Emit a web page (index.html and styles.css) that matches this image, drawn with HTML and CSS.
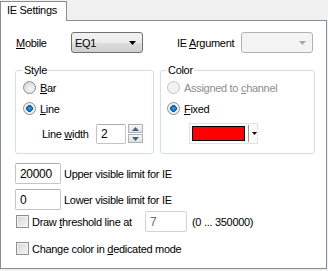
FILE: index.html
```html
<!DOCTYPE html>
<html lang="en">
<head>
    <meta charset="UTF-8">
    <title>IE Settings</title>
    <link rel="stylesheet" href="styles.css">
</head>
<body>
    <div class="tabs">
        <div class="tab">IE Settings</div>
    </div>
    <div class="panel">
        <div class="top-row">
            <span class="lbl lbl-mobile"><u>M</u>obile</span>
            <div class="combo">
                <span class="combo-text">EQ1</span>
                <svg class="arrow" width="7" height="4" viewBox="0 0 7 4"><path d="M0 0h7L3.5 4z" fill="#000"/></svg>
            </div>
            <span class="lbl lbl-arg">IE <u>A</u>rgument</span>
            <div class="combo disabled">
                <span class="combo-text"></span>
                <svg class="arrow" width="7" height="4" viewBox="0 0 7 4"><path d="M0 0h7L3.5 4z" fill="#a7a7a7"/></svg>
            </div>
        </div>

        <div class="groups">
            <fieldset class="group group-style">
                <legend>Style</legend>
                <div class="opt"><span class="radio"></span><span><u>B</u>ar</span></div>
                <div class="opt"><span class="radio checked"></span><span><u>L</u>ine</span></div>
                <div class="width-row">
                    <span class="width-lbl">Line <u>w</u>idth</span>
                    <span class="edit edit-width">2</span>
                    <span class="spin">
                        <span class="spin-btn"><svg width="7" height="4" viewBox="0 0 7 4"><path d="M0 4h7L3.5 0z" fill="#4b5c7c"/></svg></span>
                        <span class="spin-btn"><svg width="7" height="4" viewBox="0 0 7 4"><path d="M0 0h7L3.5 4z" fill="#4b5c7c"/></svg></span>
                    </span>
                </div>
            </fieldset>
            <fieldset class="group group-color">
                <legend>Color</legend>
                <div class="opt disabled"><span class="radio"></span><span>Assigned to <u>c</u>hannel</span></div>
                <div class="opt"><span class="radio checked"></span><span><u>F</u>ixed</span></div>
                <div class="color-row">
                    <div class="color-btn">
                        <span class="swatch"></span>
                        <span class="sep"></span>
                        <svg class="color-arrow" width="5" height="3" viewBox="0 0 5 3"><path d="M0 0h5L2.5 3z" fill="#000"/></svg>
                    </div>
                </div>
            </fieldset>
        </div>

        <div class="limits">
            <div class="limit-row">
                <span class="edit edit-limit">20000</span>
                <span>Upper visible limit for IE</span>
            </div>
            <div class="limit-row second">
                <span class="edit edit-limit">0</span>
                <span>Lower visible limit for IE</span>
            </div>
            <div class="check-row threshold">
                <span class="check-lbl"><span class="checkbox"></span><span>Draw <u>t</u>hreshold line at</span></span>
                <span class="edit edit-threshold">7</span>
                <span class="range">(0 ... 350000)</span>
            </div>
            <div class="check-row">
                <span class="check-lbl"><span class="checkbox"></span><span>Change color in <u>d</u>edicated mode</span></span>
            </div>
        </div>
    </div>
</body>
</html>
```

FILE: styles.css
```css
body {
    margin: 0;
    width: 328px;
    height: 271px;
    overflow: hidden;
    background-color: #f0f0f0;
    font-family: "Liberation Sans", Arial, sans-serif;
    font-size: 11px;
    letter-spacing: -0.3px;
    color: #000;
}
u {
    text-decoration: underline;
    text-underline-offset: 1px;
}
.tabs {
    display: flex;
    height: 20px;
}
.tab {
    position: relative;
    z-index: 1;
    margin-top: 1px;
    width: 67px;
    height: 20px;
    box-sizing: border-box;
    padding-left: 6px;
    border: 1px solid #898c95;
    border-bottom: none;
    background-color: #fff;
    line-height: 17px;
}
.panel {
    width: 327px;
    height: 249px;
    box-sizing: border-box;
    border: 1px solid #898c95;
    background-color: #fff;
}
.top-row {
    display: flex;
    align-items: center;
    height: 21px;
    margin-top: 11px;
    padding-left: 15px;
}
.lbl-mobile {
    width: 55px;
}
.lbl-arg {
    width: 64px;
    margin-left: 34px;
}
.combo {
    display: flex;
    align-items: center;
    justify-content: space-between;
    width: 72px;
    height: 21px;
    box-sizing: border-box;
    padding: 0 6px 0 3px;
    border: 1px solid #707070;
    border-radius: 3px;
    background: linear-gradient(#f2f2f2 0%, #ebebeb 50%, #dddddd 51%, #cfcfcf 100%);
}
.combo.disabled {
    border-color: #adb2b5;
    background: #f4f4f4;
}
.groups {
    display: flex;
    gap: 6px;
    margin-top: 11px;
    padding-left: 14px;
}
.group {
    margin: 0;
    height: 90px;
    box-sizing: border-box;
    padding: 0 7px 0 7px;
    border: 1px solid #d5dfe5;
    border-radius: 3px;
}
.group-style {
    width: 139px;
}
.group-color {
    width: 155px;
    padding-left: 6px;
}
.group legend {
    padding: 0 1px;
    line-height: 13px;
}
.opt {
    display: flex;
    align-items: center;
    gap: 4px;
    height: 21px;
}
.opt.disabled {
    color: #8d8d8d;
}
.radio {
    width: 13px;
    height: 13px;
    box-sizing: border-box;
    border: 1px solid #8e8f8f;
    border-radius: 50%;
    background: radial-gradient(circle at 60% 65%, #f4f4f4 0%, #e6e6e6 45%, #c9c9c9 100%);
}
.radio.checked {
    background: radial-gradient(circle at 50% 50%, #3aa3e6 0%, #1a72b8 28%, #0f4f8c 40%, #e6e6e6 44%, #f4f4f4 70%, #d0d0d0 100%);
}
.opt.disabled .radio {
    border-color: #c4c4c4;
    background: #f2f2f2;
}
.width-row {
    display: flex;
    align-items: center;
    height: 21px;
    margin-top: 4px;
    padding-left: 19px;
}
.width-lbl {
    width: 54px;
}
.edit {
    display: flex;
    align-items: center;
    box-sizing: border-box;
    padding-left: 4px;
    border: 1px solid #c2c5ca;
    border-top-color: #abadb3;
    border-radius: 2px;
    background-color: #fff;
    font-size: 12px;
}
.edit-width {
    width: 30px;
    height: 20px;
}
.spin {
    display: flex;
    flex-direction: column;
    gap: 1px;
    margin-left: 2px;
}
.spin-btn {
    display: flex;
    align-items: center;
    justify-content: center;
    width: 15px;
    height: 9px;
    box-sizing: border-box;
    border: 1px solid #a9b1bb;
    background: linear-gradient(#f6f6f6, #e1e1e1);
}
.color-row {
    display: flex;
    align-items: center;
    height: 21px;
    margin-top: 4px;
    padding-left: 22px;
}
.color-btn {
    display: flex;
    align-items: center;
    width: 69px;
    height: 21px;
    box-sizing: border-box;
    padding-left: 2px;
    border: 1px solid #e3e3e3;
    background-color: #fbfbfb;
}
.swatch {
    width: 53px;
    height: 15px;
    box-sizing: border-box;
    border: 1px solid #000;
    background-color: #ff0000;
}
.sep {
    width: 1px;
    height: 17px;
    margin-left: 3px;
    background-color: #9a9a9a;
    box-shadow: 1px 0 0 #fff;
}
.color-arrow {
    margin-left: 3px;
}
.limits {
    margin-top: 9px;
    padding-left: 14px;
}
.limit-row {
    display: flex;
    align-items: center;
    gap: 3px;
    height: 21px;
}
.limit-row.second {
    margin-top: 5px;
}
.edit-limit {
    width: 46px;
    height: 21px;
}
.check-row {
    display: flex;
    align-items: center;
    height: 21px;
    margin-top: 6px;
}
.check-row.threshold {
    margin-top: 1px;
}
.check-lbl {
    display: flex;
    align-items: center;
    gap: 3px;
    min-width: 130px;
    white-space: nowrap;
}
.checkbox {
    width: 13px;
    height: 13px;
    margin-left: 1px;
    box-sizing: border-box;
    border: 1px solid #8e8f8f;
    background: linear-gradient(135deg, #d6d6d6, #f6f6f6);
    box-shadow: inset 0 0 0 1px #f4f4f4;
}
.edit-threshold {
    width: 42px;
    height: 21px;
    color: #6d6d6d;
    border-color: #d0d3d8;
}
.range {
    margin-left: 5px;
}
```
